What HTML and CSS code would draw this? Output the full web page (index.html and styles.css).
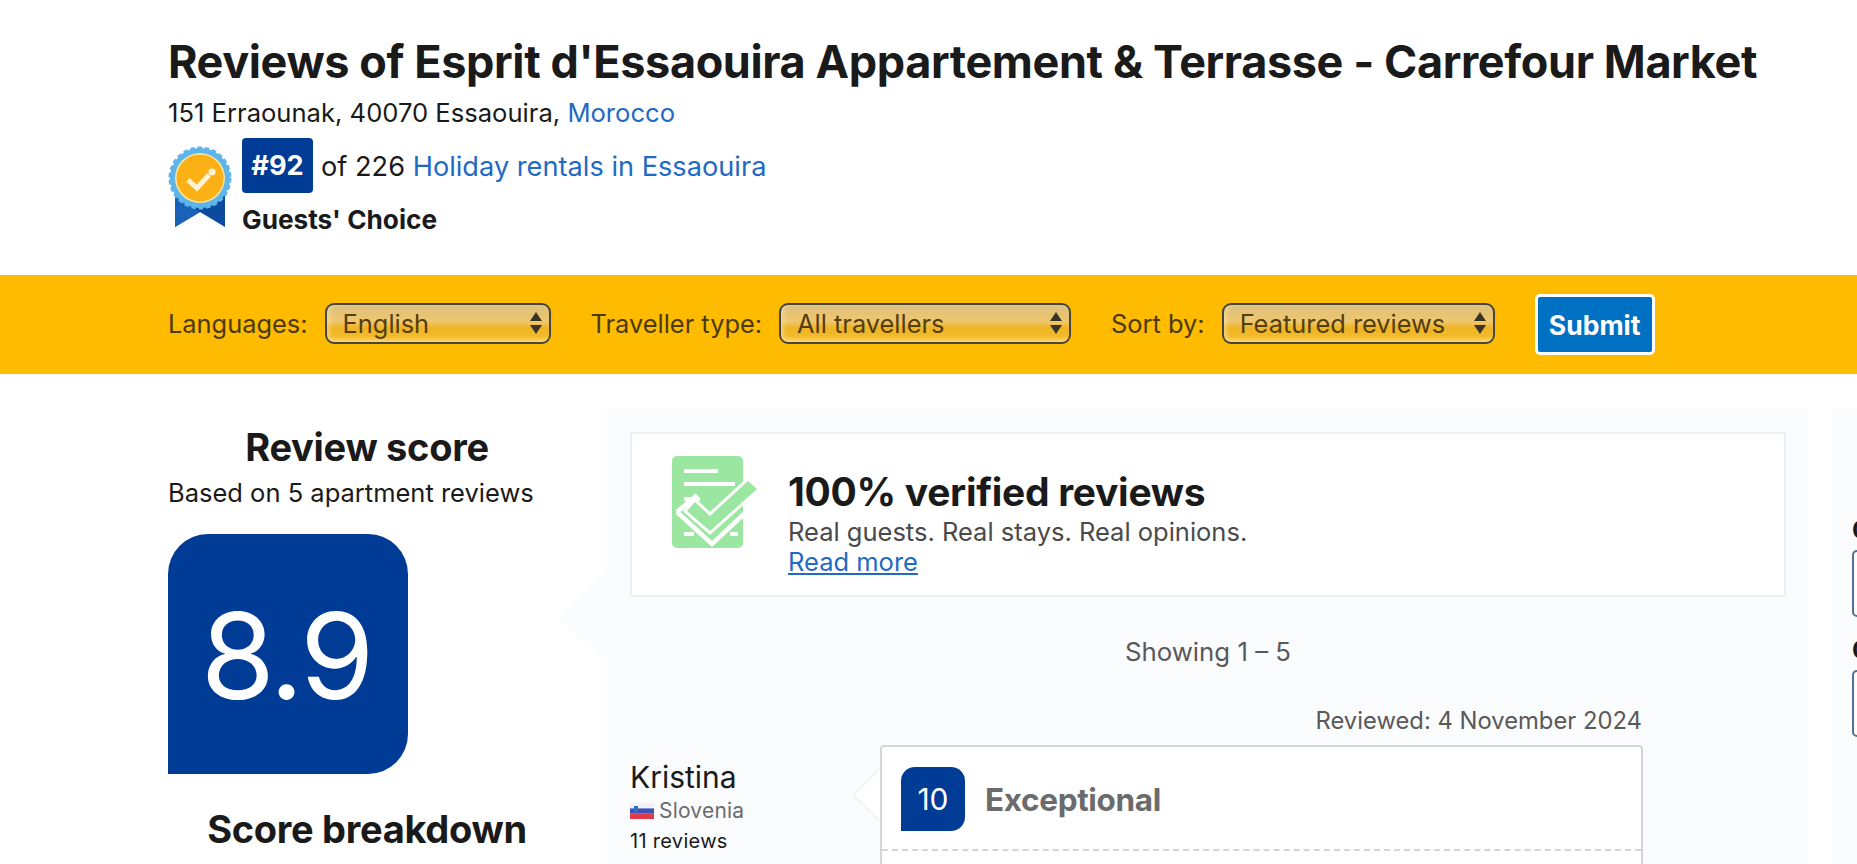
FILE: index.html
```html
<!DOCTYPE html>
<html lang="en">
<head>
<meta charset="utf-8">
<title>Reviews of Esprit d'Essaouira</title>
<link rel="stylesheet" href="styles.css">
</head>
<body>
<header class="head">
  <h1 class="title">Reviews of Esprit d'Essaouira Appartement &amp; Terrasse - Carrefour Market</h1>
  <p class="address">151 Erraounak, 40070 Essaouira, <a href="#">Morocco</a></p>
  <div class="rank">
    <svg class="medal" viewBox="0 0 64 82" width="64" height="82" aria-hidden="true">
      <path d="M7 50V81L32 66L57 81V50Z" fill="#0b4a9e"/>
      <path d="M7 50V81L32 66Z" fill="#1a62b8"/>
      <circle cx="32" cy="32" r="30" fill="#5db5ea" stroke="#5db5ea" stroke-width="3" stroke-dasharray="4.5 2.8"/>
      <circle cx="32" cy="32" r="25" fill="#fbe6a2"/>
      <circle cx="32" cy="32" r="23.5" fill="#fbb116"/>
      <path d="M20 34L29 42L41 29" fill="none" stroke="#fff3d6" stroke-width="5"/>
      <circle cx="44" cy="26" r="3.6" fill="#fff3d6"/>
    </svg>
    <div class="rank-text">
      <div class="rank-line"><span class="rank-no">#92</span><span class="rank-of">of 226 <a href="#">Holiday rentals in Essaouira</a></span></div>
      <div class="choice">Guests' Choice</div>
    </div>
  </div>
</header>

<form class="filters">
  <label class="f-label">Languages:</label>
  <span class="pick pick-lang"><select><option>English</option></select>
    <svg class="updown" viewBox="0 0 12 22" width="12" height="22" aria-hidden="true"><path d="M6 0L12 9H0ZM6 22L0 13H12Z"/></svg></span>
  <label class="f-label">Traveller type:</label>
  <span class="pick pick-type"><select><option>All travellers</option></select>
    <svg class="updown" viewBox="0 0 12 22" width="12" height="22" aria-hidden="true"><path d="M6 0L12 9H0ZM6 22L0 13H12Z"/></svg></span>
  <label class="f-label">Sort by:</label>
  <span class="pick pick-sort"><select><option>Featured reviews</option></select>
    <svg class="updown" viewBox="0 0 12 22" width="12" height="22" aria-hidden="true"><path d="M6 0L12 9H0ZM6 22L0 13H12Z"/></svg></span>
  <button type="button" class="submit">Submit</button>
</form>

<main class="main">
  <aside class="score-col">
    <h2 class="col-h">Review score</h2>
    <p class="based">Based on 5 apartment reviews</p>
    <div class="big-score">8.9</div>
    <h2 class="col-h breakdown">Score breakdown</h2>
  </aside>

  <section class="panel">
    <span class="panel-tip"></span>
    <div class="verified">
      <svg class="v-icon" viewBox="0 0 85 93" width="85" height="93" aria-hidden="true">
        <rect width="71" height="92" rx="5" fill="#9be6a0"/>
        <path d="M12 15H46M12 28H63M12 43H28M12 78H22M66 78H58" stroke="#fff" stroke-width="4"/>
        <path d="M5 56L25 39M5 56L40 88L72 58" fill="none" stroke="#fff" stroke-width="4.5"/>
        <path d="M15 55L23 46L38 60L76 25L85 33L38 75Z" fill="#9be6a0" stroke="#fff" stroke-width="6" paint-order="stroke"/>
      </svg>
      <div class="v-text">
        <div class="v-title">100% verified reviews</div>
        <div class="v-sub">Real guests. Real stays. Real opinions.</div>
        <a class="v-more" href="#">Read more</a>
      </div>
    </div>
    <p class="showing">Showing 1 – 5</p>
    <p class="reviewed">Reviewed: 4 November 2024</p>
    <article class="review">
      <div class="who">
        <div class="who-name">Kristina</div>
        <div class="who-country">
          <svg class="flag" viewBox="0 0 24 16" width="24" height="16" aria-hidden="true">
            <rect width="24" height="5.4" fill="#f2f2f6"/><rect y="5.4" width="24" height="5.3" fill="#3a52b4"/><rect y="10.7" width="24" height="5.3" fill="#e0394a"/>
            <path d="M4 3H8V8L6 10L4 8Z" fill="#2f6fc4"/>
          </svg>Slovenia</div>
        <div class="who-count">11 reviews</div>
      </div>
      <div class="card">
        <span class="card-tip"></span>
        <div class="card-head">
          <span class="small-score">10</span>
          <span class="verdict">Exceptional</span>
        </div>
      </div>
    </article>
  </section>

  <aside class="side">
    <div class="side-label">Check-in</div>
    <div class="side-box"></div>
    <div class="side-label">Check-out</div>
    <div class="side-box"></div>
  </aside>
</main>
</body>
</html>
```

FILE: styles.css
```css
* { box-sizing: border-box; }
html, body { margin: 0; height: 864px; overflow: hidden; background: #fff; }
body { font-family: Inter, "Liberation Sans", sans-serif; color: #1a1a1a; width: 1857px; }
a { color: #1f6ac4; text-decoration: none; }
p, h1, h2 { margin: 0; }

.head { height: 275px; padding: 35px 0 0 168px; }
.title { font-size: 45px; line-height: 54px; font-weight: 700; letter-spacing: -0.39px; white-space: nowrap; }
.address { font-size: 25.6px; line-height: 34px; margin-top: 7px; }
.rank { display: flex; gap: 10px; margin-top: 7px; align-items: flex-start; }
.medal { margin-top: 9px; flex: none; }
.rank-line { display: flex; align-items: center; gap: 8px; font-size: 27.2px; line-height: 55px; }
.rank-of { padding-top: 2px; }
.rank-no { background: #003b95; color: #fff; font-weight: 700; width: 71px; height: 55px; border-radius: 4px; text-align: center; }
.choice { font-size: 26.2px; font-weight: 700; line-height: 30px; margin-top: 11px; }

.filters { height: 99px; background: #ffbb00; padding: 0 0 0 168px; display: flex; align-items: center; font-size: 25.4px; color: #4b3a10; }
.f-label { white-space: nowrap; margin: 0 17px 3px 0; }
.pick { position: relative; display: block; height: 41px; margin: 0 40px 3px 0; }
.pick-lang { width: 226px; }
.pick-type { width: 292px; }
.pick-sort { width: 273px; }
.pick select {
  appearance: none; width: 100%; height: 100%; padding: 0 0 0 16px; margin: 0;
  font: inherit; color: #553d0c; border: 2px solid #46463e; border-radius: 9px;
  background: linear-gradient(#dcbf7c 0%, #efc76e 45%, #eeb423 62%, #f3bb2c 85%, #f8d36b 100%);
  box-shadow: inset 3px 0 4px rgba(255, 235, 190, 0.45);
}
.updown { position: absolute; right: 9px; top: 9px; fill: #3a3526; }
.submit {
  width: 120px; height: 61px; border: 3px solid #fff; border-radius: 5px;
  background: #0071c2; color: #fff; font: 700 26.5px Inter, "Liberation Sans", sans-serif;
}

.main { display: flex; padding: 35px 0 0 168px; height: 490px; overflow: hidden; }
.score-col { width: 439px; flex: none; padding-top: 15px; }
.col-h { font-size: 38px; line-height: 46px; font-weight: 700; text-align: center; width: 398px; letter-spacing: -0.3px; }
.based { font-size: 25.5px; line-height: 32px; margin-top: 7px; white-space: nowrap; }
.big-score {
  width: 240px; height: 240px; margin-top: 25px; padding-right: 4px; background: #003b95; color: #fff;
  border-radius: 40px 40px 40px 0; font-size: 120px; line-height: 243px; text-align: center; letter-spacing: -3px;
}
.breakdown { margin-top: 32px; }

.panel { position: relative; width: 1201px; flex: none; background: #fbfcfe; padding: 23px 22px 0 23px; }
.panel-tip { position: absolute; left: -49px; top: 161px; border-style: solid; border-width: 47px 49px 47px 0; border-color: transparent #fbfcfe transparent transparent; }
.verified { height: 165px; display: flex; align-items: flex-start; gap: 31px; padding: 22px 0 0 40px; background: #fff; border: 2px solid #eef0f3; }
.v-icon { flex: none; }
.v-text { margin-top: 13px; }
.v-title { font-size: 39px; line-height: 46px; font-weight: 700; letter-spacing: -0.3px; }
.v-sub { font-size: 25.5px; line-height: 32px; color: #4a4a4a; margin-top: 1px; }
.v-more { display: inline-block; font-size: 25.5px; line-height: 28px; text-decoration: underline; }
.showing { font-size: 25.8px; line-height: 32px; color: #595959; text-align: center; margin-top: 39px; }
.reviewed { font-size: 23.8px; line-height: 30px; color: #595959; width: 1012px; text-align: right; margin-top: 38px; }
.review { display: flex; margin-top: 9px; }
.who { width: 250px; flex: none; padding-top: 14px; }
.who-name { font-size: 30px; line-height: 36px; }
.who-country { display: flex; align-items: center; gap: 5px; font-size: 21px; line-height: 26px; color: #6b6b6b; margin-top: 3px; letter-spacing: 0.2px; }
.who-count { font-size: 20px; line-height: 26px; margin-top: 4px; letter-spacing: 0.3px; }
.card { position: relative; width: 763px; height: 300px; background: #fff; border: 2px solid #d4d5d8; border-radius: 4px; }
.card-tip { position: absolute; left: -28px; top: 22px; width: 0; height: 0; border-style: solid; border-width: 26px 26px 26px 0; border-color: transparent #fff transparent transparent; filter: drop-shadow(-1px 0 0 #e2e3e6); }
.card-head { height: 104px; display: flex; align-items: flex-start; gap: 20px; padding: 20px 0 0 19px; border-bottom: 2px dashed #d4d5d8; }
.small-score { width: 64px; height: 64px; background: #003b95; color: #fff; border-radius: 14px 14px 14px 0; text-align: center; font-size: 30px; line-height: 64px; }
.verdict { font-size: 31.5px; line-height: 65px; font-weight: 700; color: #6b6b6b; letter-spacing: -0.35px; }

.side { margin-left: 24px; width: 300px; flex: none; background: #fbfcfe; padding-top: 101px; padding-left: 20px; }
.side-label { font-size: 25px; font-weight: 700; line-height: 40px; white-space: nowrap; }
.side-box { width: 260px; height: 67px; background: #fff; border: 2px solid #4f7296; border-radius: 5px; margin-bottom: 13px; }
```
